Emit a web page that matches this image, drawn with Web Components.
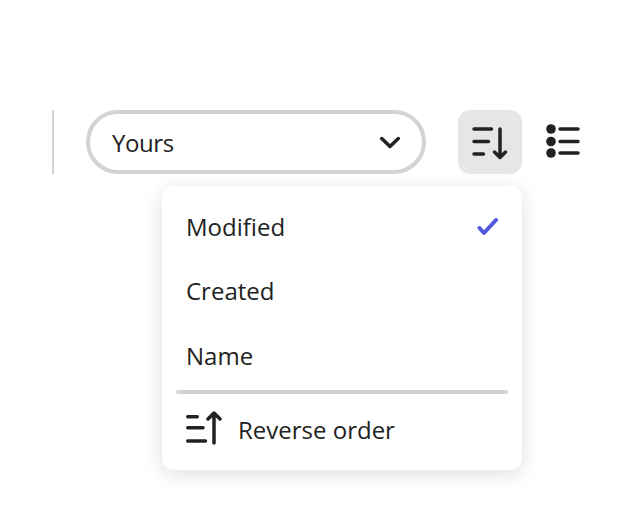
<!DOCTYPE html>
<html lang="en">
    <head>
        <meta charset="UTF-8">
        <title>Sort menu</title>
        <style>
            html, body { margin: 0; background: #fff; min-height: 100vh; }
            body { font-family: "Open Sans", "Noto Sans", sans-serif; color: #222; }
        </style>
    </head>
    <body>
        <sort-toolbar>
            <filter-picker label="Yours" slot="picker"></filter-picker>
            <icon-button active slot="actions">
                <svg width="40" height="40" viewBox="0 0 40 40" fill="none" stroke="#222" stroke-width="3.500" stroke-linecap="round" stroke-linejoin="round">
                    <path d="M4 7H21.500M4 19.500H18.500M4 32H13.500M30 7V35M24.500 30L30 35.500L35.500 30" />
                </svg>
            </icon-button>
            <icon-button offset slot="actions">
                <svg width="40" height="40" viewBox="0 0 40 40" fill="none">
                    <g fill="#222"><circle cx="7" cy="7" r="4.800" /><circle cx="7" cy="19.500" r="4.800" /><circle cx="7" cy="31" r="4.800" /></g>
                    <path d="M16 7H34M16 19.500H34M16 31H34" stroke="#222" stroke-width="3.500" stroke-linecap="round" />
                </svg>
            </icon-button>
            <sort-menu slot="menu">
                <menu-row checked>Modified</menu-row>
                <menu-row>Created</menu-row>
                <menu-row>Name</menu-row>
                <menu-divider></menu-divider>
                <menu-row compact>
                    <svg slot="icon" width="36" height="36" viewBox="0 0 36 36" fill="none" stroke="#222" stroke-width="3.500" stroke-linecap="round" stroke-linejoin="round">
                        <path d="M1.750 5.700H11.250M1.750 16.700H17M1.750 30H19.500M28 3V32M22 8L28 2L34 8" />
                    </svg>
                    Reverse order
                </menu-row>
            </sort-menu>
        </sort-toolbar>

        <script>
            class SortToolbar extends HTMLElement {
                constructor() {
                    super();
                    this.attachShadow({ mode: "open" });
                    this.shadowRoot.innerHTML = /* html */ `
                        <style>
                            :host { display: block; padding: 110px 0 0 52px; }
                            .bar { display: flex; align-items: center; height: 64px; }
                            .rule { width: 2px; height: 64px; background: #d3d3d3; margin-right: 32px; }
                            .actions { display: flex; margin-left: 32px; }
                            .pop { margin: 12px 0 0 110px; }
                        </style>
                        <div class="bar">
                            <div class="rule"></div>
                            <slot name="picker"></slot>
                            <div class="actions"><slot name="actions"></slot></div>
                        </div>
                        <div class="pop"><slot name="menu"></slot></div>
                    `;
                }
            }

            class FilterPicker extends HTMLElement {
                constructor() {
                    super();
                    this.attachShadow({ mode: "open" });
                    this.shadowRoot.innerHTML = /* html */ `
                        <style>
                            :host { display: block; }
                            .box {
                                box-sizing: border-box; width: 340px; height: 64px;
                                display: flex; align-items: center; justify-content: space-between;
                                padding: 0 22px 0 22px;
                                border: 4px solid #d3d3d3; border-radius: 32px;
                                font-size: 24px; color: #222;
                            }
                            span { letter-spacing: -0.4px; }
                            svg { display: block; }
                        </style>
                        <div class="box">
                            <span>${this.getAttribute("label") || ""}</span>
                            <svg width="22" height="14" viewBox="0 0 22 14" fill="none" stroke="#222" stroke-width="3.500" stroke-linecap="round" stroke-linejoin="round">
                                <path d="M3.750 3.500L12 11.500L20.250 3.500" />
                            </svg>
                        </div>
                    `;
                }
            }

            class IconButton extends HTMLElement {
                constructor() {
                    super();
                    this.attachShadow({ mode: "open" });
                    this.shadowRoot.innerHTML = /* html */ `
                        <style>
                            :host {
                                display: flex; align-items: center; justify-content: center;
                                width: 64px; height: 64px; border-radius: 12px;
                            }
                            :host([active]) { background: #e6e6e6; }
                            :host([offset]) { margin-left: 10px; }
                        </style>
                        <slot></slot>
                    `;
                }
            }

            class SortMenu extends HTMLElement {
                constructor() {
                    super();
                    this.attachShadow({ mode: "open" });
                    this.shadowRoot.innerHTML = /* html */ `
                        <style>
                            :host {
                                display: block; box-sizing: border-box; width: 360px; height: 284px;
                                padding: 8px 14px 0; background: #fff; border-radius: 12px;
                                box-shadow: 0 4px 20px rgba(0, 0, 0, 0.13);
                            }
                        </style>
                        <slot></slot>
                    `;
                }
            }

            class MenuRow extends HTMLElement {
                constructor() {
                    super();
                    this.attachShadow({ mode: "open" });
                    this.shadowRoot.innerHTML = /* html */ `
                        <style>
                            :host {
                                display: flex; align-items: center; height: 64.500px;
                                padding: 0 10px; font-size: 24px; color: #222;
                            }
                            :host([compact]) { height: 70px; gap: 16px; }
                            .label { flex: 1; display: flex; align-items: center; gap: 16px; }
                            .check { display: none; }
                            :host([checked]) .check { display: block; }
                            ::slotted(svg) { display: block; }
                        </style>
                        <slot name="icon"></slot>
                        <span class="label"><slot></slot></span>
                        <svg class="check" width="22" height="20" viewBox="0 0 22 20" fill="none" stroke="#5258dc" stroke-width="4" stroke-linecap="round" stroke-linejoin="round">
                            <path d="M3.500 12L8 17L20 4" />
                        </svg>
                    `;
                }
            }

            class MenuDivider extends HTMLElement {
                constructor() {
                    super();
                    this.attachShadow({ mode: "open" });
                    this.shadowRoot.innerHTML = /* html */ `
                        <style>
                            :host { display: block; height: 4px; margin-top: 2.500px; background: #d3d3d3; border-radius: 2px; }
                        </style>
                    `;
                }
            }

            customElements.define("sort-toolbar", SortToolbar);
            customElements.define("filter-picker", FilterPicker);
            customElements.define("icon-button", IconButton);
            customElements.define("sort-menu", SortMenu);
            customElements.define("menu-row", MenuRow);
            customElements.define("menu-divider", MenuDivider);
        </script>
    </body>
</html>
